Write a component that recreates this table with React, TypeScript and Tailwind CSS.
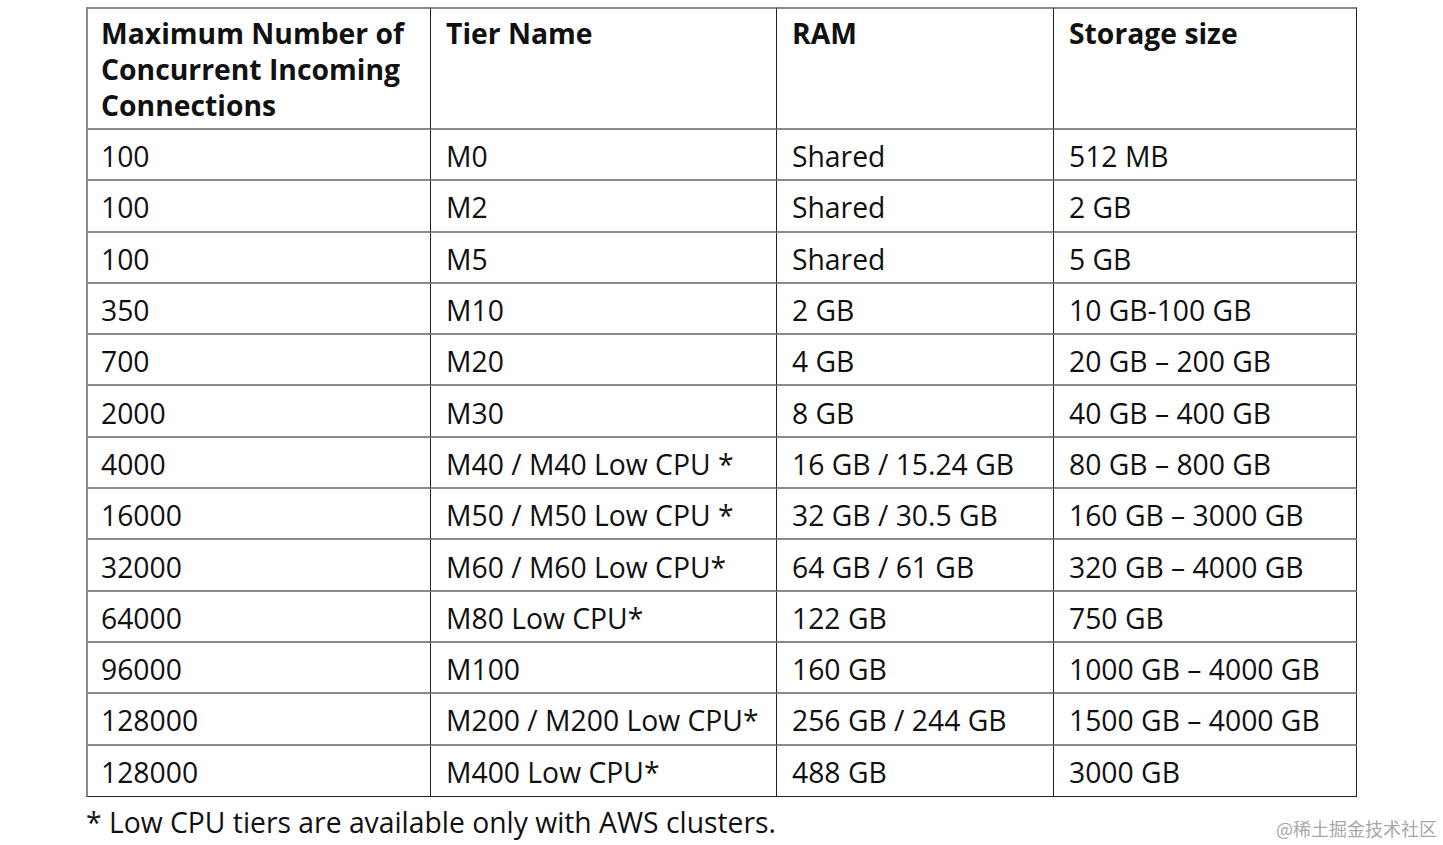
import React from 'react';

const rows: [string, string, string, string][] = [
  ['100', 'M0', 'Shared', '512 MB'],
  ['100', 'M2', 'Shared', '2 GB'],
  ['100', 'M5', 'Shared', '5 GB'],
  ['350', 'M10', '2 GB', '10 GB-100 GB'],
  ['700', 'M20', '4 GB', '20 GB – 200 GB'],
  ['2000', 'M30', '8 GB', '40 GB – 400 GB'],
  ['4000', 'M40 / M40 Low CPU *', '16 GB / 15.24 GB', '80 GB – 800 GB'],
  ['16000', 'M50 / M50 Low CPU *', '32 GB / 30.5 GB', '160 GB – 3000 GB'],
  ['32000', 'M60 / M60 Low CPU*', '64 GB / 61 GB', '320 GB – 4000 GB'],
  ['64000', 'M80 Low CPU*', '122 GB', '750 GB'],
  ['96000', 'M100', '160 GB', '1000 GB – 4000 GB'],
  ['128000', 'M200 / M200 Low CPU*', '256 GB / 244 GB', '1500 GB – 4000 GB'],
  ['128000', 'M400 Low CPU*', '488 GB', '3000 GB'],
];

const headers = ['Maximum Number of Concurrent Incoming Connections', 'Tier Name', 'RAM', 'Storage size'];
const widths = ['w-[345px]', 'w-[346px]', 'w-[277px]', 'w-[303px]'];

export default function App() {
  return (
    <div className="w-[1443px] h-[845px] bg-white relative font-['Open_Sans',sans-serif] text-[#111]">
      <div className="pl-[86px] pt-[7px]">
        <table className="border-separate border-spacing-0 table-fixed w-[1271px] text-[28.3px]">
          <thead>
            <tr className="h-[123px]">
              {headers.map((h, i) => (
                <th
                  key={h}
                  className={`${widths[i]} align-top text-left font-bold leading-[36px] pr-[10px] pt-[6px] border-t-2 border-t-[#8a8a8a] border-b-2 border-b-[#8a8a8a] border-r-[1.5px] border-r-[#222] ${i === 0 ? 'pl-[13px] border-l-2 border-l-[#8a8a8a]' : 'pl-[15px]'}`}
                >
                  {h}
                </th>
              ))}
            </tr>
          </thead>
          <tbody>
            {rows.map((r, ri) => (
              <tr key={ri} className="h-[51.3px]">
                {r.map((c, ci) => (
                  <td
                    key={ci}
                    className={`pt-[3px] pb-0 leading-[34px] whitespace-nowrap border-r-[1.5px] border-r-[#222] ${ri === rows.length - 1 ? 'border-b-[1.5px] border-b-[#222]' : 'border-b-2 border-b-[#8a8a8a]'} ${ci === 0 ? 'pl-[13px] border-l-2 border-l-[#8a8a8a]' : 'pl-[15px]'}`}
                  >
                    {c}
                  </td>
                ))}
              </tr>
            ))}
          </tbody>
        </table>
        <p className="text-[28.3px] leading-[36px] mt-[7px]">* Low CPU tiers are available only with AWS clusters.</p>
      </div>
      <div className="absolute right-[6px] top-[815px] text-[18px] text-[#a8a8a8] font-['Noto_Sans_CJK_SC',sans-serif]">
        @稀土掘金技术社区
      </div>
    </div>
  );
}
